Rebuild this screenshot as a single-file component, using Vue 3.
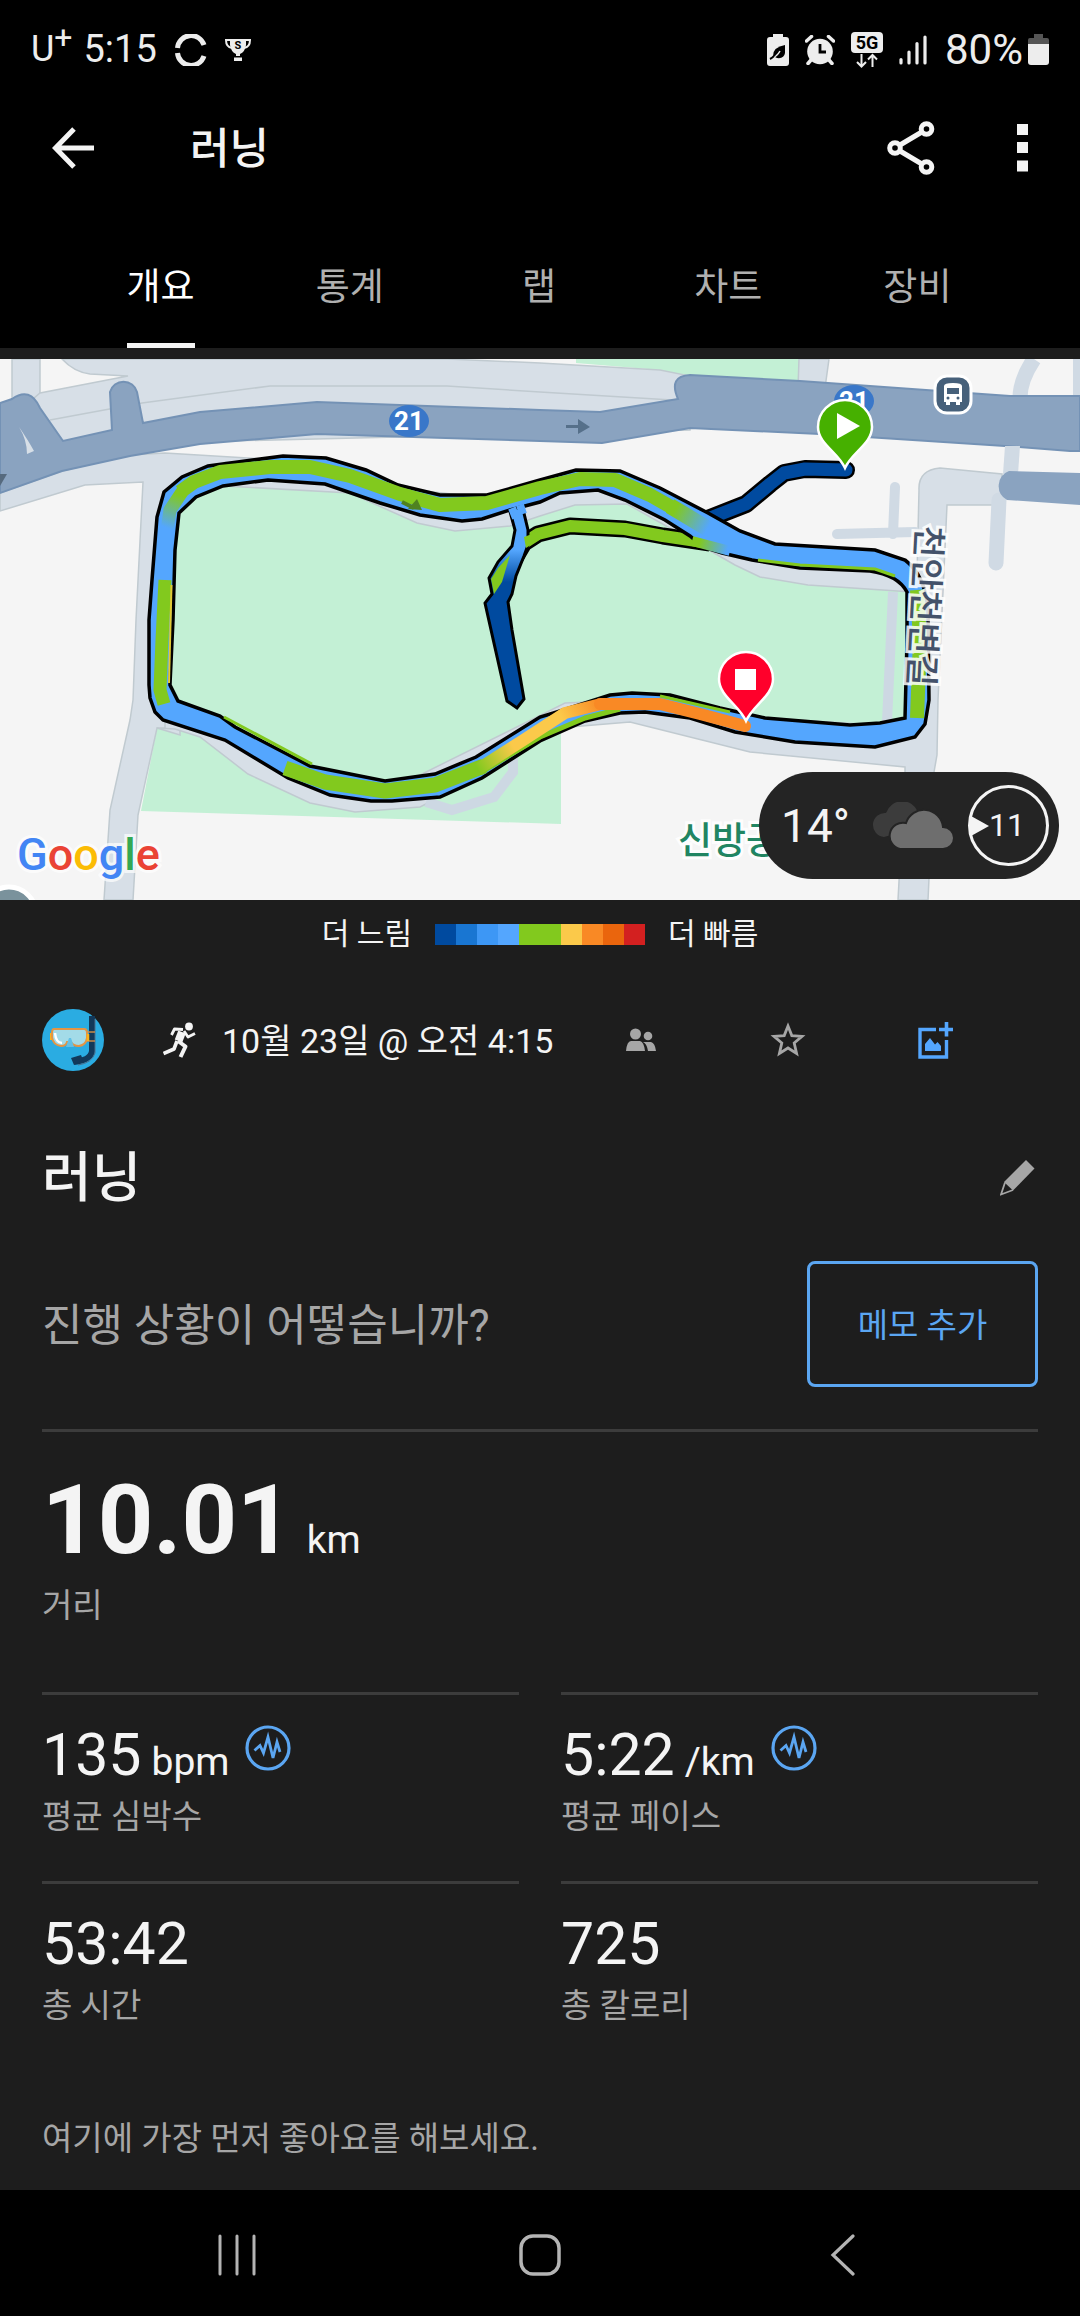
<template>
  <div class="screen">
    <header class="top">
      <div class="statusBar">
        <div class="statusGroup">
          <span class="carrier">U<sup>+</sup></span>
          <span class="clock">5:15</span>
          <svg class="syncIcon" width="32" height="32" viewBox="0 0 32 32" fill="none" stroke="#ededed" stroke-width="5">
            <path d="M2.5 14 A13.6 13.6 0 0 1 29 11" />
            <path d="M2.5 19 A13.6 13.6 0 0 0 29 22" />
          </svg>
          <svg width="28" height="24" viewBox="0 0 28 24">
            <path d="M6 1 H22 V7 Q21 14 16 16 V18 H12 V16 Q7 14 6 7Z M10 19.500 H18 V23 H10Z" fill="#ededed" />
            <path d="M6 2 H2 Q2 9 8 10 M22 2 H26 Q26 9 20 10" fill="none" stroke="#ededed" stroke-width="2" />
            <text x="14" y="11" text-anchor="middle" class="trophyText">S</text>
          </svg>
        </div>
        <div class="statusGroup right">
          <svg width="22" height="32" viewBox="0 0 22 32">
            <path d="M6 0 H16 V3 H19 Q22 3 22 6 V29 Q22 32 19 32 H3 Q0 32 0 29 V6 Q0 3 3 3 H6Z" fill="#ededed" />
            <path d="M18 11 V19 Q17 25 10 24 L6 22 Q6 13 18 11Z" fill="#000" />
            <path d="M3 25 Q10 23 13 17" fill="none" stroke="#ededed" stroke-width="1.500" />
            <path d="M3 25 Q5 24 7 22" fill="none" stroke="#000" stroke-width="2" />
          </svg>
          <svg class="alarmIcon" width="30" height="30" viewBox="0 0 30 30">
            <circle cx="15" cy="16.500" r="12.800" fill="#ededed" />
            <path d="M1.500 6 L6.500 1.500 M28.500 6 L23.500 1.500 M6 25 L3 28.500 M24 25 L27 28.500" stroke="#ededed" stroke-width="3.500" stroke-linecap="round" />
            <path d="M15 9 V17 H21" fill="none" stroke="#000" stroke-width="2.800" />
          </svg>
          <svg class="netIcon" width="32" height="36" viewBox="0 0 32 36">
            <rect width="32" height="21" rx="4" fill="#ededed" />
            <text x="16" y="17" text-anchor="middle" class="netText">5G</text>
            <path d="M10.500 22 V34 M6 30 L10.500 34.500 L15 30 M21.500 35 V23 M17 27.500 L21.500 23 L26 27.500" fill="none" stroke="#ededed" stroke-width="2" />
          </svg>
          <svg width="28" height="30" viewBox="0 0 28 30" stroke="#ededed" stroke-width="3.200" stroke-linecap="round">
            <path d="M2 24.500 V28 M10 17 V28 M18 8.500 V28 M26 2 V28" />
          </svg>
          <span class="percent">80%</span>
          <svg width="21" height="31" viewBox="0 0 21 31">
            <path d="M6 0 H15 V4 H19 Q21 4 21 6 V11 H0 V6 Q0 4 2 4 H6Z" fill="#555" />
            <path d="M0 10 H21 V28 Q21 31 18 31 H3 Q0 31 0 28Z" fill="#ededed" />
          </svg>
        </div>
      </div>

      <div class="appBar">
        <button class="iconBtn" aria-label="뒤로">
          <svg width="42" height="42" viewBox="0 0 42 42" fill="none" stroke="#f4f4f4" stroke-width="5">
            <path d="M42 21 H4 M22 2 L3.500 21 L22 40" />
          </svg>
        </button>
        <h1>러닝</h1>
        <button class="iconBtn" aria-label="공유">
          <svg width="48" height="54" viewBox="0 0 48 54" fill="none" stroke="#f4f4f4" stroke-width="5">
            <circle cx="8" cy="27" r="5.300" />
            <circle cx="39.500" cy="8" r="5.300" />
            <circle cx="39.500" cy="46" r="5.300" />
            <path d="M13 24 L34 11.500 M13 30 L34 42.500" />
          </svg>
        </button>
        <button class="iconBtn more" aria-label="더보기">
          <svg width="11" height="48" viewBox="0 0 11 48" fill="#f4f4f4">
            <path d="M0 0 H11 V11 H0Z M0 18 H11 V29 H0Z M0 36.500 H11 V47.500 H0Z" />
          </svg>
        </button>
      </div>

      <nav class="tabs">
        <button v-for="tab in tabs" :key="tab" class="tab" :class="{ active: tab === activeTab }" @click="activeTab = tab">
          <span>{{ tab }}</span>
        </button>
      </nav>
    </header>

    <section class="map">
      <svg class="mapCanvas" viewBox="0 359 1080 541">
        <defs>
          <linearGradient id="fastStart" gradientUnits="userSpaceOnUse" x1="478" y1="770" x2="600" y2="700">
            <stop offset="0" stop-color="#82c91e" />
            <stop offset="0.300" stop-color="#fbc94a" />
            <stop offset="0.700" stop-color="#fbc94a" />
            <stop offset="1" stop-color="#f98925" />
          </linearGradient>
          <linearGradient id="greenToBlue" gradientUnits="userSpaceOnUse" x1="675" y1="510" x2="708" y2="528">
            <stop offset="0" stop-color="#82c91e" />
            <stop offset="1" stop-color="#54a6fe" />
          </linearGradient>
          <linearGradient id="joinFade" gradientUnits="userSpaceOnUse" x1="700" y1="540" x2="728" y2="548">
            <stop offset="0" stop-color="#82c91e" />
            <stop offset="1" stop-color="#54a6fe" />
          </linearGradient>
          <linearGradient id="cornerFade" gradientUnits="userSpaceOnUse" x1="180" y1="495" x2="167" y2="528">
            <stop offset="0" stop-color="#82c91e" />
            <stop offset="1" stop-color="#54a6fe" />
          </linearGradient>
          <linearGradient id="branchFade" gradientUnits="userSpaceOnUse" x1="0" y1="550" x2="0" y2="582">
            <stop offset="0" stop-color="#54a6fe" />
            <stop offset="1" stop-color="#004a9f" />
          </linearGradient>
        </defs>
        <rect y="359" width="1080" height="541" fill="#f5f5f5" />

        <!-- parks -->
        <path d="M576 359 H800 L798 382 L686 376 L660 370 L576 363Z" fill="#c3f0d5" />
        <path d="M157 728 L141 811 L561 824 V700 L400 700Z" fill="#c3f0d5" />

        <!-- minor roads -->
        <g fill="#d7dfe7" stroke="#c0cad0" stroke-width="1.500">
          <path d="M12 359 H40 V420 H12Z" />
          <path d="M799 359 H829 L825 388 H798Z" />
          <path d="M62 359 Q74 372 90 374 L128 376 L40 393 L20 410 L60 445 L690 430 V376 L660 370 L540 363 L447 359Z" />
          <path d="M0 493 L62 471 L130 455 L165 453 L280 460 V500 H180 V735 L157 728 L138 815 L133 900 H104 L110 810 L130 720 L133 700 L136 620 L143 482 L85 485 L0 511Z" />
          <path d="M157 728 L175 729 L200 737 L248 774 L310 803 L355 812 L420 807 L430 802 L520 740 L570 727 L630 722 L750 752 L905 767 V772 L898 900 H928 L934 772 L937 755 L938 700 L947 505 H1002 V474 L940 468 Q918 470 919 490 L917 575 L905 563 L875 553 L775 547 L708 516 L660 491 L576 475 L487 498 L398 488 L326 462 H225 L165 500 V728Z" />
          <path d="M50 420 L142 403 L270 386 H447 L540 392 L672 400" fill="none" />
        </g>
        <path d="M1020 398 Q1020 380 1034 359" fill="none" stroke="#d0dae4" stroke-width="15" />
        <path d="M1077 359 V402" stroke="#d0dae4" stroke-width="8" />
        <path d="M999 500 L996 563" stroke="#d0dae4" stroke-width="15" stroke-linecap="round" />
        <path d="M895 487 L893 534 M837 534 L915 532" stroke="#d0dae4" stroke-width="10" stroke-linecap="round" />

        <path class="park" d="M176 505 L225 486 L350 493 L417 523 L455 531 L510 526 L540 516 L575 505 L627 504 L700 545 L735 565 L760 577 L808 585 L912 592 V722 L860 724 L765 718 L720 708 L670 700 L632 700 L565 703 L418 776 L385 785 L310 772 L220 720 L170 702Z" />
        <path d="M893 592 L887 722" stroke="#cdd8e3" stroke-width="10" />
        <path d="M426 802 L452 810 L494 797 L513 772 V755" fill="none" stroke="#cdd8e3" stroke-width="10" />

        <!-- route 21 -->
        <path d="M0 403 L12 399 Q30 386 40 408 L63 441 L112 430 L110 392 A14 14 0 0 1 137 392 L143 423 L200 412 L317 402 L540 410 L600 412 L678 399 Q668 376 690 375 L800 381 L1010 396 H1080 V451 H1070 L1005 446 L820 434 L690 428 L602 443 L540 441 L317 434 L200 444 L130 456 L62 471 L0 493Z" class="highway" />
        <path d="M19 427 Q28 440 34 451 L27 454 Q27 440 19 427Z" fill="#d7dfe7" />
        <path d="M1005 446 H1020 L1018 474 H1003Z" fill="#d0dae4" />
        <path d="M1080 473 L1009 471 A16 16 0 0 0 1007 500 L1080 505Z" fill="#8aa3c0" />
        <path d="M0 474 H7 L0 486Z" fill="#566a7e" />
        <path d="M566 425 H578 V419 L590 427 L578 434 V428 H566Z" fill="#56708a" />

        <g class="shield">
          <ellipse cx="409" cy="421" rx="20" ry="16" />
          <text x="409" y="430" text-anchor="middle">21</text>
          <ellipse cx="854" cy="401" rx="20" ry="16" />
          <text x="854" y="410" text-anchor="middle">21</text>
        </g>

        <g>
          <rect x="935" y="376" width="36" height="37" rx="12" fill="#46607a" stroke="#fff" stroke-width="3" />
          <path d="M944 386 Q944 383 953 383 Q962 383 962 386 V402 H960 V405 H956 V402 H950 V405 H946 V402 H944Z" fill="#fff" />
          <path d="M947 388 H959 V394 H947Z" fill="#46607a" />
          <circle cx="948" cy="398" r="1.500" fill="#46607a" />
          <circle cx="958" cy="398" r="1.500" fill="#46607a" />
        </g>

        <!-- branches off the main loop -->
        <g fill="none" stroke-linejoin="round">
          <path d="M846 470 L805 469 L784 473 L770 484 L746 504 L700 522" stroke="#000" stroke-width="18" stroke-linecap="round" />
          <path d="M846 470 L805 469 L784 473 L770 484 L746 504 L700 522" stroke="#004a9f" stroke-width="13" stroke-linecap="round" />
          <path d="M710 543 L663 536 L625 529 L570 526 L538 534 L524 543 L514 560" stroke="#000" stroke-width="17" />
          <path d="M710 543 L663 536 L625 529 L570 526 L538 534 L524 543 L514 560" stroke="#82c91e" stroke-width="12" />
        </g>
        <path d="M509 508 L515 530 L512 546 L498 562 L489 578 L492 594 L485 603 L507 701 L517 708 L524 699 L512 630 L508 602 L512 594 L516 576 L524 556 L528 545 L528 530 L522 505Z" fill="url(#branchFade)" stroke="#000" stroke-width="3" />
        <path d="M524 537 L540 531 V539 L526 548Z" fill="#82c91e" />
        <path d="M510 555 L498 568 L491 579 L494 594 L502 582Z" fill="#82c91e" />

        <!-- main loop -->
        <path class="loop" fill-rule="evenodd" d="M149 685 L149 620 L152 580 L157 517 L164 492 L182 477 L208 466 L283 456 L326 458 L366 470 L398 485 L440 495 L487 495 L540 480 L576 470 L620 471 L660 488 L708 513 L740 531 L775 544 L875 550 L905 560 Q925 575 928 610 L929 700 L925 724 L915 737 L875 747 L795 742 L735 732 L690 718 L645 712 L620 713 L585 721 L540 741 L482 778 L440 797 L392 801 L371 801 L330 795 L288 778 L225 740 L163 720 L155 712 L150 698Z
          M170 684 L173 620 L175 550 L179 513 L196 497 L223 486 L268 480 L325 484 L380 503 L420 515 L462 521 L482 519 L510 510 L540 502 L560 493 L598 490 L625 500 L665 520 L690 536 L703 547 L722 553 L752 560 L800 568 L870 571 Q898 575 907 592 V640 L905 718 L880 723 L850 725 L765 718 L720 708 L670 695 L632 693 L610 695 L560 711 L540 717 L476 757 L435 774 L385 781 L310 766 L235 727 L220 716 L178 701 L170 685Z" />
        <path d="M512 508 L516 518 M520 505 L523 514" stroke="#54a6fe" stroke-width="8" />
        <g fill="none" stroke-linejoin="round">
          <path d="M165 580 L162 640 L160 690 L164 704" stroke="#82c91e" stroke-width="13" />
          <path d="M171.500 585 L169 683" stroke="#e2c934" stroke-width="2" />
          <path d="M167 530 L170 510 L184 489" stroke="url(#cornerFade)" stroke-width="13" />
          <path d="M180 492 L194 482 L220 472 L270 467 L310 467 L350 476 L400 494 L440 505 L487 503 L540 488 L580 479 L615 480 L650 495 L680 512" stroke="#82c91e" stroke-width="14" />
          <path d="M670 506 L710 530" stroke="url(#greenToBlue)" stroke-width="16" />
          <path d="M692 541 L730 551" stroke="url(#joinFade)" stroke-width="10" />
          <path d="M758 560 L800 565 L875 569 L895 576" stroke="#82c91e" stroke-width="3" />
          <path d="M917 590 L920 640 L917 718" stroke="#82c91e" stroke-width="14" />
          <path d="M224 717 L312 764" stroke="#82c91e" stroke-width="3" />
          <path d="M285 768 L325 782 L385 791 L435 785 L484 766" stroke="#82c91e" stroke-width="15" />
          <path d="M480 773 L540 737 L585 718 L620 709" stroke="#82c91e" stroke-width="5" />
          <path d="M660 696 L730 712" stroke="#82c91e" stroke-width="3" />
          <path d="M478 769 L525 739 L565 713 L601 704" stroke="url(#fastStart)" stroke-width="12" />
          <path d="M600 704 H660 L700 714 L745 726" stroke="#f98925" stroke-width="12" stroke-linecap="round" />
          <path d="M402 502 L414 508" stroke="#4f8220" stroke-width="4" />
          <path d="M417 499 L422 510 L408 509Z" fill="#4f8220" />
        </g>

        <g class="streetLabel">
          <text transform="translate(917 525) rotate(93)">천안천변길</text>
        </g>
        <text x="678" y="854" class="parkLabel">신방공</text>

        <!-- start and finish pins -->
        <path d="M845 468 C838 452 818 444 818 427 A27 27 0 0 1 872 427 C872 444 852 452 845 468Z" fill="#46b000" stroke="#fff" stroke-width="2.500" />
        <path d="M837 413 L860 426 L837 439Z" fill="#fff" />
        <path d="M746 721 C739 705 719 696 719 679 A27 27 0 0 1 773 679 C773 696 753 705 746 721Z" fill="#ff002b" stroke="#fff" stroke-width="2.500" />
        <path d="M735 669 H756 V690 H735Z" fill="#fff" />

        <circle cx="9" cy="914" r="27" fill="#7a929c" stroke="#fff" stroke-width="5" />
        <text x="17" y="870" class="google"><tspan fill="#4285f4">G</tspan><tspan fill="#ea4335">o</tspan><tspan fill="#fbbc05">o</tspan><tspan fill="#4285f4">g</tspan><tspan fill="#34a853">l</tspan><tspan fill="#ea4335">e</tspan></text>
      </svg>

      <div class="weather">
        <span class="temp">14°</span>
        <svg width="82" height="48" viewBox="0 0 82 48">
          <path d="M12 35 A12 12 0 0 1 14 11 A17 17 0 0 1 46 10 L30 30Z" fill="#3c3c3c" />
          <path d="M28 47 A13 13 0 0 1 34 21 A19 19 0 0 1 71 25 A11 11 0 0 1 71 47Z" fill="#6e6e6e" stroke="#242424" stroke-width="2" />
        </svg>
        <div class="wind">
          <svg width="18" height="20" viewBox="0 0 18 20"><path d="M0 0 L18 10 L0 20Z" fill="#f4f4f4" /></svg>
          <span>11</span>
        </div>
      </div>
    </section>

    <div class="legend">
      <span>더 느림</span>
      <div class="scale">
        <i v-for="(color, index) in paceColors" :key="index" :style="{ backgroundColor: color }"></i>
      </div>
      <span>더 빠름</span>
    </div>

    <main class="content">
      <div class="metaRow">
        <svg class="avatar" width="62" height="62" viewBox="0 0 62 62">
          <circle cx="31" cy="31" r="31" fill="#2aace2" />
          <path d="M50 7 V42 Q49 51 32 53" fill="none" stroke="#12395a" stroke-width="6" />
          <path d="M53 10 V44 Q50 54 36 56" fill="none" stroke="#4a6f8c" stroke-width="1" />
          <path d="M29 49 L39 46 L41 51 L32 56Z" fill="#12395a" />
          <path d="M9 24 V31" stroke="#fbb31c" stroke-width="2" />
          <path d="M45 23 H53 M45 32 H53" stroke="#c98a4a" stroke-width="1.500" />
          <path d="M12 20 H42 Q45 20 45 24 V29 Q44 36 37 37 Q31 37 29 33 H25 Q24 37 19 37 Q11 36 10 28 V24 Q10 20 12 20Z" fill="#a3dbe8" stroke="#e39545" stroke-width="2" />
          <path d="M13 24 Q14 34 20 34" fill="none" stroke="#fff" stroke-width="2.500" />
          <path d="M24 38 L27 29 H29 L32 38Z" fill="#62c0e6" />
          <path d="M46 25 V32" stroke="#fbb31c" stroke-width="2.500" />
        </svg>
        <svg class="runner" width="34" height="36" viewBox="0 0 34 36" fill="none" stroke="#f4f4f4" stroke-linejoin="round">
          <circle cx="26" cy="4.500" r="3.900" fill="#f4f4f4" stroke="none" />
          <path d="M19 10 L15.500 19" stroke-width="8" />
          <path d="M20 7.500 L11.500 7 L8.500 13" stroke-width="2.800" />
          <path d="M21 9 L25 15 L32 11.500" stroke-width="2.800" />
          <path d="M14 19 L11 27 L0.500 31.500" stroke-width="3.600" />
          <path d="M15 19 L22.500 24.500 L17.500 35" stroke-width="4" />
        </svg>
        <time>10월 23일 @ 오전 4:15</time>
        <button class="iconBtn people" aria-label="공개 범위">
          <svg width="30" height="24" viewBox="0 0 30 24" fill="#a6a6a6">
            <circle cx="9.500" cy="6" r="5.500" />
            <circle cx="22" cy="8" r="4.300" />
            <path d="M0 23 Q1 13 5 13 H14 Q18 14 19 23Z M17 14 H25 Q29 15 30 23 H22 Q21 17 18.500 15Z" />
          </svg>
        </button>
        <button class="iconBtn star" aria-label="즐겨찾기">
          <svg width="36" height="36" viewBox="0 0 36 36" fill="none" stroke="#a6a6a6" stroke-width="2.800">
            <path d="M18 4 L21.800 13.600 L32 14.400 L24.200 21 L26.600 31.500 L18 26 L9.400 31.500 L11.800 21 L4 14.400 L14.200 13.600Z" />
          </svg>
        </button>
        <button class="iconBtn" aria-label="사진 추가">
          <svg width="36" height="37" viewBox="0 0 36 37">
            <path d="M18 7.500 H2 V35 H28.500 V18" fill="none" stroke="#54a6fe" stroke-width="3.400" />
            <path d="M21 7.500 H35 M28.500 0 V14.500" stroke="#54a6fe" stroke-width="3.600" />
            <path d="M7 29 V22 L12 16 L17 22.500 L19.500 20 L23 24 V29Z" fill="#54a6fe" />
          </svg>
        </button>
      </div>

      <div class="titleRow">
        <h2>러닝</h2>
        <button class="iconBtn" aria-label="이름 편집">
          <svg width="35" height="36" viewBox="0 0 35 36">
            <path d="M26 0 L34.500 8.500 L13 30.500 L4 22Z" fill="#a6a6a6" />
            <path d="M5 22.500 L1 34.500 L13 30" fill="none" stroke="#a6a6a6" stroke-width="1.800" />
          </svg>
        </button>
      </div>

      <div class="noteRow">
        <p>진행 상황이 어떻습니까?</p>
        <button class="noteBtn">메모 추가</button>
      </div>

      <div class="distance">
        <div class="big"><strong>10.01</strong><small>km</small></div>
        <div class="label">거리</div>
      </div>

      <div class="stats">
        <div v-for="stat in stats" :key="stat.label" class="stat">
          <div class="value">
            <span>{{ stat.value }}</span>
            <small v-if="stat.unit">{{ stat.unit }}</small>
            <svg v-if="stat.chart" class="pulse" width="46" height="46" viewBox="0 0 46 46" fill="none" stroke="#5ba6f2">
              <circle cx="23" cy="23" r="21" stroke-width="3.200" />
              <path d="M9.500 25.500 L15 20.500 L18.500 28 L23 12 L28 33 L32 17 L35 27" stroke-width="2.800" />
            </svg>
          </div>
          <div class="label">{{ stat.label }}</div>
        </div>
      </div>

      <p class="likes">여기에 가장 먼저 좋아요를 해보세요.</p>
    </main>

    <footer class="navBar">
      <button class="iconBtn" aria-label="최근 앱">
        <svg width="42" height="42" viewBox="0 0 42 42" stroke="#b4b4b4" stroke-width="3" stroke-linecap="round">
          <path d="M4 2 V40 M21 2 V40 M38 2 V40" />
        </svg>
      </button>
      <button class="iconBtn" aria-label="홈">
        <svg width="42" height="42" viewBox="0 0 42 42" fill="none" stroke="#b4b4b4" stroke-width="3.500">
          <rect x="2" y="2" width="38" height="38" rx="12" />
        </svg>
      </button>
      <button class="iconBtn" aria-label="이전">
        <svg width="42" height="42" viewBox="0 0 42 42" fill="none" stroke="#b4b4b4" stroke-width="3.200" stroke-linecap="round">
          <path d="M31 2 L11 21 L31 40" />
        </svg>
      </button>
    </footer>
  </div>
</template>

<script setup>
import { ref } from 'vue'

const tabs = ['개요', '통계', '랩', '차트', '장비']
const activeTab = ref('개요')

// slow to fast
const paceColors = [
  '#004a9f', '#1976d2', '#3d97f5', '#54a6fe', '#82c91e',
  '#82c91e', '#fbc94a', '#f98925', '#ea650d', '#d32020'
]

const stats = [
  { value: '135', unit: 'bpm', label: '평균 심박수', chart: true },
  { value: '5:22', unit: '/km', label: '평균 페이스', chart: true },
  { value: '53:42', label: '총 시간' },
  { value: '725', label: '총 칼로리' }
]
</script>

<style>
body {
  margin: 0;
  background-color: #000;
}
</style>

<style scoped>
.screen {
  display: flex;
  flex-direction: column;
  min-height: 100vh;
  background-color: #1d1d1d;
  color: #f4f4f4;
  font-family: Roboto, "Noto Sans CJK KR", sans-serif;
  line-height: 1.2;
}
.screen svg {
  display: block;
  flex: none;
}
h1,
h2,
p {
  margin: 0;
}
button {
  font-family: inherit;
  line-height: inherit;
  background: none;
  border: none;
  padding: 0;
  cursor: pointer;
}
.top {
  background-color: #000;
  margin-bottom: 11px;
}
.statusBar {
  display: flex;
  justify-content: space-between;
  align-items: center;
  box-sizing: border-box;
  height: 98px;
  padding: 2px 31px 0;
  color: #ededed;
}
.statusGroup {
  display: flex;
  align-items: center;
}
.carrier {
  font-size: 36px;
  margin-right: 11px;
}
.carrier sup {
  font-size: 32px;
  line-height: 0;
}
.clock {
  font-size: 38px;
}
.percent {
  font-size: 42px;
}
.syncIcon {
  margin: 0 17px 0 18px;
}
.right svg {
  margin-right: 16px;
}
.right svg:nth-of-type(4) {
  margin-right: 18px;
}
.right svg:last-child {
  margin: 0 0 0 5px;
}
.trophyText {
  font-size: 11px;
  font-weight: 700;
  fill: #000;
}
.netText {
  font-size: 18px;
  font-weight: 700;
  fill: #000;
}
.appBar {
  display: flex;
  align-items: center;
  height: 100px;
  padding: 0 52px;
}
.appBar h1 {
  flex: 1;
  margin-left: 96px;
  padding-top: 4px;
  font-size: 43px;
  font-weight: 500;
}
.more {
  margin-left: 82px;
}
.tabs {
  display: grid;
  grid-template-columns: repeat(5, 1fr);
  height: 150px;
  padding: 0 68px 0 66px;
}
.tab {
  display: flex;
  justify-content: center;
  color: #b0b0b0;
  font-size: 37px;
}
.tab span {
  display: grid;
  align-items: center;
  box-sizing: border-box;
  height: 100%;
  padding-top: 35px;
  border-bottom: 5px solid transparent;
}
.tab.active {
  color: #fff;
}
.tab.active span {
  border-color: #f4f4f4;
}
.map {
  position: relative;
}
.mapCanvas {
  width: 100%;
}
.park {
  fill: #c3f0d5;
  stroke: #c0cad0;
  stroke-width: 1.5;
}
.highway {
  fill: #8aa3c0;
  stroke: #7492b5;
  stroke-width: 2;
}
.shield {
  fill: #3977c9;
}
.shield text {
  fill: #fff;
  font-size: 26px;
  font-weight: 700;
}
.loop {
  fill: #54a6fe;
  stroke: #000;
  stroke-width: 3.5;
}
.streetLabel,
.parkLabel {
  font-size: 35px;
  font-weight: 500;
  fill: #44526a;
  stroke: rgba(255, 255, 255, 0.85);
  stroke-width: 6;
  paint-order: stroke;
}
.parkLabel {
  font-size: 37px;
  fill: #218562;
}
.google {
  font-size: 45px;
  font-weight: 500;
  stroke: rgba(255, 255, 255, 0.7);
  stroke-width: 6;
  paint-order: stroke;
}
.weather {
  position: absolute;
  right: 21px;
  bottom: 21px;
  display: flex;
  align-items: center;
  height: 107px;
  padding: 0 10px 0 22px;
  border-radius: 54px;
  background-color: #242424;
}
.temp {
  padding-top: 3px;
  font-size: 46px;
  margin-right: 22px;
}
.wind {
  display: flex;
  align-items: center;
  box-sizing: border-box;
  width: 81px;
  height: 81px;
  margin-left: 14px;
  border: 3px solid #f4f4f4;
  border-radius: 50%;
  font-size: 32px;
}
.legend {
  display: flex;
  justify-content: center;
  align-items: center;
  gap: 23px;
  height: 68px;
  font-size: 30px;
}
.scale {
  display: flex;
}
.scale i {
  width: 21px;
  height: 21px;
}
.content {
  flex: 1;
  padding: 0 42px;
}
.metaRow {
  display: flex;
  align-items: center;
  height: 144px;
}
.runner {
  margin: 0 25px 0 59px;
}
.metaRow time {
  padding-top: 2px;
  font-size: 34px;
}
.people {
  margin-left: 73px;
}
.star {
  margin: 0 112px 0 114px;
}
.titleRow {
  display: flex;
  justify-content: space-between;
  align-items: center;
  height: 132px;
  padding-right: 3px;
}
.titleRow h2 {
  padding-top: 2px;
  font-size: 54px;
  font-weight: 500;
}
.noteRow {
  display: flex;
  justify-content: space-between;
  align-items: center;
  padding: 17px 0 42px;
  border-bottom: 3px solid #3c3c3c;
}
.noteRow p {
  padding-top: 4px;
  color: #a6a6a6;
  font-size: 44px;
}
.noteBtn {
  width: 231px;
  height: 126px;
  padding-top: 4px;
  border: 3px solid #5ba6f2;
  border-radius: 8px;
  color: #5ba6f2;
  font-size: 33px;
}
.distance {
  height: 260px;
}
.big {
  display: flex;
  align-items: baseline;
  height: 120px;
  padding-top: 30px;
  line-height: 116px;
}
.big strong {
  font-size: 97px;
  font-weight: 700;
}
.big small,
.value small {
  font-size: 39px;
}
.big small {
  margin-left: 14px;
}
.label {
  color: #a6a6a6;
  font-size: 33px;
  line-height: 48px;
}
.stats {
  display: grid;
  grid-template-columns: 1fr 1fr;
  column-gap: 42px;
}
.stat {
  box-sizing: border-box;
  height: 189px;
  padding-top: 22px;
  border-top: 3px solid #3c3c3c;
}
.value {
  display: flex;
  align-items: baseline;
  height: 76px;
  line-height: 76px;
  font-size: 59px;
}
.value small {
  margin-left: 10px;
}
.pulse {
  align-self: flex-start;
  margin: 8px 0 0 16px;
}
.likes {
  padding-top: 45px;
  color: #a6a6a6;
  font-size: 33px;
  line-height: 48px;
}
.navBar {
  display: flex;
  justify-content: space-around;
  align-items: center;
  box-sizing: border-box;
  height: 126px;
  padding: 4px 86px 0;
  background-color: #000;
}
</style>
